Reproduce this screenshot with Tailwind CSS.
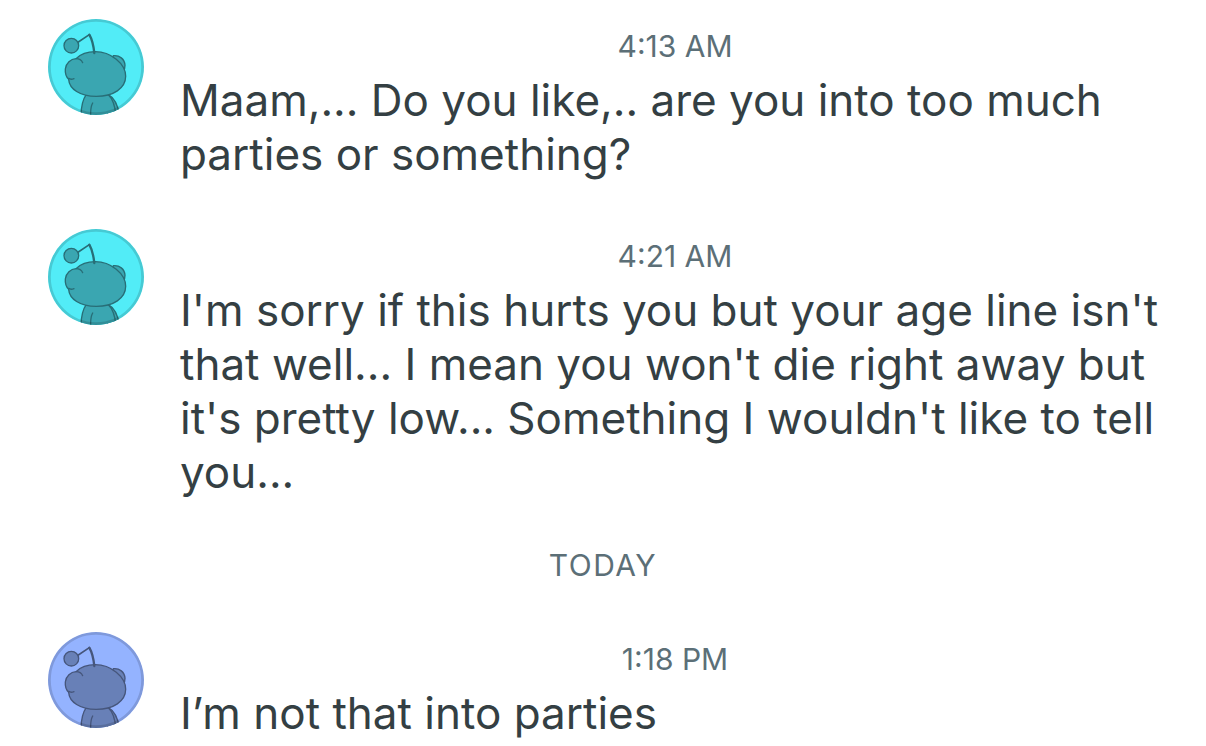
<!DOCTYPE html>
<html lang="en">
<head>
    <meta charset="UTF-8">
    <meta name="viewport" content="width=device-width, initial-scale=1.0">
    <title>Chat</title>
    <script src="https://cdn.jsdelivr.net/npm/@tailwindcss/browser@4"></script>
</head>
<body class="bg-white font-['Inter','Liberation_Sans',sans-serif] text-[#343f43]">

    <!-- shared avatar drawing, coloured by the text colour of each use -->
    <svg class="hidden" aria-hidden="true">
        <symbol id="avatar" viewBox="0 0 288 288">
            <rect width="288" height="288" fill="currentColor"/>
            <g fill="var(--body)" stroke="var(--line)" stroke-width="4" stroke-linecap="round" stroke-linejoin="round">
                <!-- body and arms -->
                <path d="M180 226 Q210 242 216 300 L178 300 Z"/>
                <path d="M115 226 Q98 250 99 300 L203 300 Q204 250 180 226 Z"/>
                <path d="M134 252 Q127 264 128 290" fill="none"/>
                <!-- right ear -->
                <path d="M196 110 C214 108 230 120 231 139 C231 148 230 152 226 158 L190 130 Z"/>
                <!-- head -->
                <path d="M84 119 C98 105 118 98 142 98 C188 98 233 134 233 172 C233 208 196 232 145 232 C96 232 64 210 62 181 C55 174 51 162 52 150 C54 132 68 120 84 119 Z"/>
                <path d="M84 119 C94 119 101 124 104 131 M62 178 C67 182 73 181 78 179" fill="none"/>
                <!-- antenna -->
                <circle cx="70" cy="80" r="22"/>
                <path d="M91 69 L124 47" fill="none" stroke-width="5"/>
                <path d="M124 47 Q135 66 139 102" fill="none" stroke-width="7"/>
            </g>
            <circle cx="144" cy="144" r="140" fill="none" stroke="black" stroke-opacity="0.14" stroke-width="9"/>
        </symbol>
    </svg>

    <main class="flex flex-col gap-12 pt-[19px] pl-12">

        <article class="flex items-start">
            <svg class="size-24 shrink-0 rounded-full text-[#52ecf7] [--body:#3aa6b1] [--line:#286e77]" role="img" aria-label="User avatar"><use href="#avatar"/></svg>
            <div class="flex-1">
                <time class="block text-center text-[30px] leading-[54px] text-[#5c6f77]">4:13 AM</time>
                <p class="px-9 text-[44px] leading-[54px]">Maam,... Do you like,.. are you into too much parties or something?</p>
            </div>
        </article>

        <article class="flex items-start">
            <svg class="size-24 shrink-0 rounded-full text-[#52ecf7] [--body:#3aa6b1] [--line:#286e77]" role="img" aria-label="User avatar"><use href="#avatar"/></svg>
            <div class="flex-1">
                <time class="block text-center text-[30px] leading-[54px] text-[#5c6f77]">4:21 AM</time>
                <p class="px-9 text-[44px] leading-[54px]">I'm sorry if this hurts you but your age line isn't that well... I mean you won't die right away but it's pretty low... Something I wouldn't like to tell you...</p>
            </div>
        </article>

        <h2 class="pr-12 text-center text-[30px] leading-[37px] tracking-wider text-[#5c6f77]">TODAY</h2>

        <article class="flex items-start">
            <svg class="size-24 shrink-0 rounded-full text-[#94b3ff] [--body:#6880b7] [--line:#46567c]" role="img" aria-label="User avatar"><use href="#avatar"/></svg>
            <div class="flex-1">
                <time class="block text-center text-[30px] leading-[54px] text-[#5c6f77]">1:18 PM</time>
                <p class="px-9 text-[44px] leading-[54px]">I’m not that into parties</p>
            </div>
        </article>

    </main>

</body>
</html>
